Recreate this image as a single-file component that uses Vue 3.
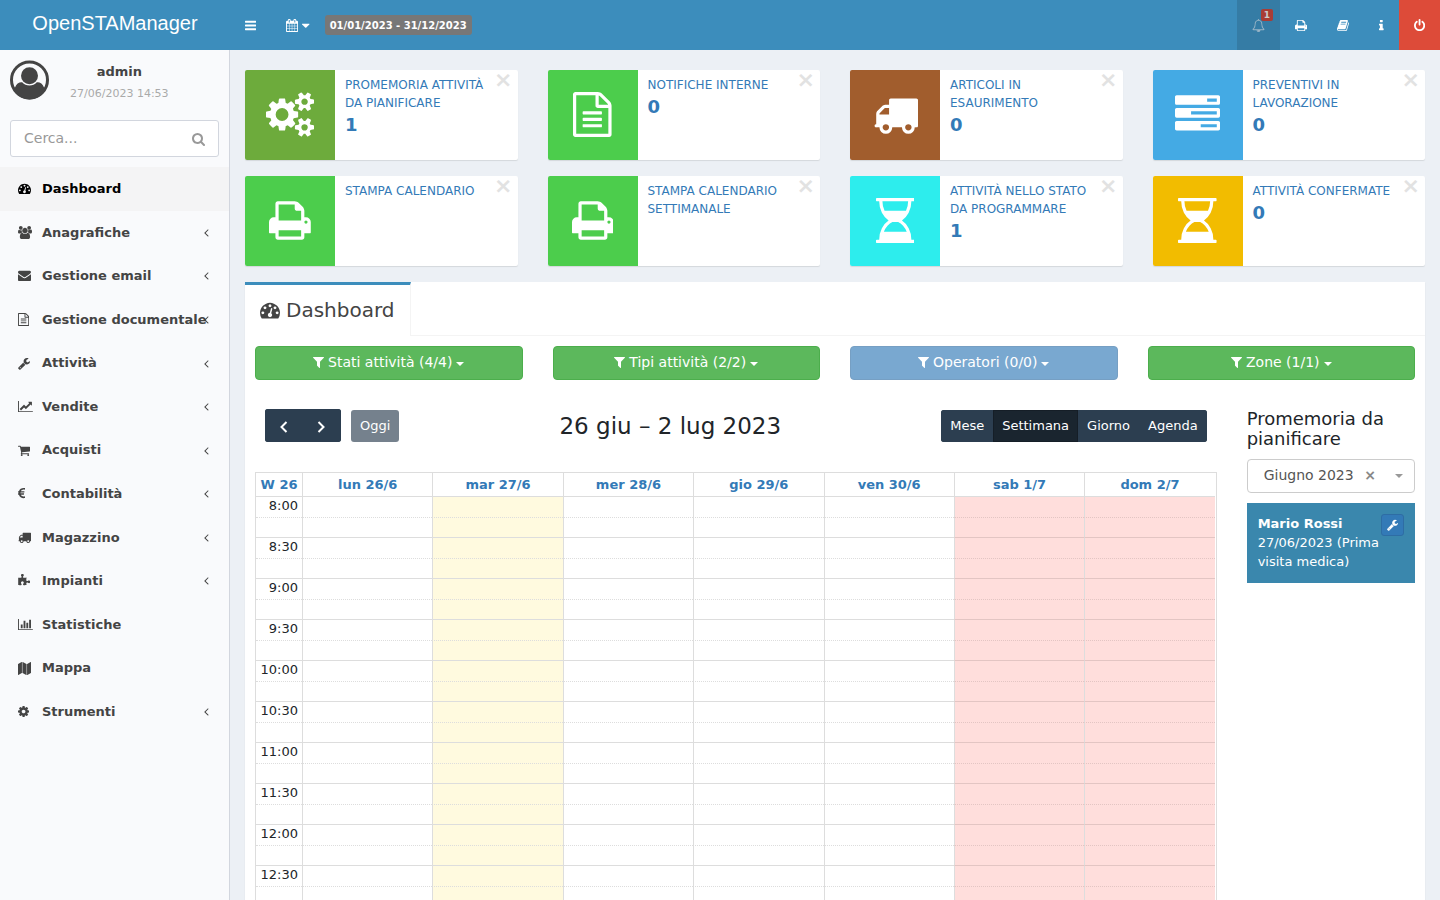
<script setup>
import { h } from 'vue'

const glyphs = {
  bars: [128, 1536, 'M1664 1344v128q0 26-19 45t-45 19h-1408q-26 0-45-19t-19-45v-128q0-26 19-45t45-19h1408q26 0 45 19t19 45zm0-512v128q0 26-19 45t-45 19h-1408q-26 0-45-19t-19-45v-128q0-26 19-45t45-19h1408q26 0 45 19t19 45zm0-512v128q0 26-19 45t-45 19h-1408q-26 0-45-19t-19-45v-128q0-26 19-45t45-19h1408q26 0 45 19t19 45z'],
  calendar: [64, 1664, 'M192 1664h288v-288h-288v288zm352 0h320v-288h-320v288zm-352-352h288v-320h-288v320zm352 0h320v-320h-320v320zm-352-384h288v-288h-288v288zm736 736h320v-288h-320v288zm-384-736h320v-288h-320v288zm768 736h288v-288h-288v288zm-384-352h320v-320h-320v320zm-352-864v-288q0-13-9.5-22.5t-22.5-9.5h-64q-13 0-22.5 9.5t-9.5 22.5v288q0 13 9.5 22.5t22.5 9.5h64q13 0 22.5-9.5t9.5-22.5zm736 864h288v-320h-288v320zm-384-384h320v-288h-320v288zm384 0h288v-288h-288v288zm32-480v-288q0-13-9.5-22.5t-22.5-9.5h-64q-13 0-22.5 9.5t-9.5 22.5v288q0 13 9.5 22.5t22.5 9.5h64q13 0 22.5-9.5t9.5-22.5zm384-64v1280q0 52-38 90t-90 38h-1408q-52 0-90-38t-38-90v-1280q0-52 38-90t90-38h128v-96q0-66 47-113t113-47h64q66 0 113 47t47 113v96h384v-96q0-66 47-113t113-47h64q66 0 113 47t47 113v96h128q52 0 90 38t38 90z'],
  caret: [384, 1024, 'M1408 704q0 26-19 45l-448 448q-19 19-45 19t-45-19l-448-448q-19-19-19-45t19-45 45-19h896q26 0 45 19t19 45z'],
  search: [64, 1664, 'M1216 832q0-185-131.5-316.5t-316.5-131.5-316.5 131.5-131.5 316.5 131.5 316.5 316.5 131.5 316.5-131.5 131.5-316.5zm512 832q0 52-38 90t-90 38q-54 0-90-38l-343-342q-179 124-399 124-143 0-273.5-55.5t-225-150-150-225-55.5-273.5 55.5-273.5 150-225 225-150 273.5-55.5 273.5 55.5 225 150 150 225 55.5 273.5q0 220-124 399l343 343q37 37 37 90z'],
  dashboard: [0, 1792, 'M384 1152q0-53-37.5-90.5t-90.5-37.5-90.5 37.5-37.5 90.5 37.5 90.5 90.5 37.5 90.5-37.5 37.5-90.5zm192-448q0-53-37.5-90.5t-90.5-37.5-90.5 37.5-37.5 90.5 37.5 90.5 90.5 37.5 90.5-37.5 37.5-90.5zm428 481l101-382q6-26-7.5-48.5t-38.5-29.5-48 6.5-30 39.5l-101 382q-60 5-107 43.5t-63 98.5q-20 77 20 146t117 89 146-20 89-117q16-60-6-117t-72-91zm660-33q0-53-37.5-90.5t-90.5-37.5-90.5 37.5-37.5 90.5 37.5 90.5 90.5 37.5 90.5-37.5 37.5-90.5zm-640-640q0-53-37.5-90.5t-90.5-37.5-90.5 37.5-37.5 90.5 37.5 90.5 90.5 37.5 90.5-37.5 37.5-90.5zm448 192q0-53-37.5-90.5t-90.5-37.5-90.5 37.5-37.5 90.5 37.5 90.5 90.5 37.5 90.5-37.5 37.5-90.5zm320 448q0 261-141 483-19 29-54 29h-1402q-35 0-54-29-141-221-141-483 0-182 71-348t191-286 286-191 348-71 348 71 286 191 191 286 71 348z'],
  users: [0, 1920, 'M593 896q-162 5-265 128h-134q-82 0-138-40.5t-56-118.5q0-353 124-353 6 0 43.5 21t97.5 42.5 119 21.5q67 0 133-23-5 37-5 66 0 159 93 290zm1071 637q0 120-73 189.5t-194 69.5h-874q-121 0-194-69.5t-73-189.5q0-53 3.5-103.5t14-109 26.5-108.5 43-97.5 62-81 85.5-53.5 111.5-20q10 0 43 21.5t73 48 107 48 135 21.5 135-21.5 107-48 73-48 43-21.5q61 0 111.5 20t85.5 53.5 62 81 43 97.5 26.5 108.5 14 109 3.5 103.5zm-1024-1277q0 106-75 181t-181 75-181-75-75-181 75-181 181-75 181 75 75 181zm704 384q0 159-112.5 271.5t-271.5 112.5-271.5-112.5-112.5-271.5 112.5-271.5 271.5-112.5 271.5 112.5 112.5 271.5zm576 225q0 78-56 118.5t-138 40.5h-134q-103-123-265-128 93-131 93-290 0-29-5-66 66 23 133 23 59 0 119-21.5t97.5-42.5 43.5-21q124 0 124 353zm-128-609q0 106-75 181t-181 75-181-75-75-181 75-181 181-75 181 75 75 181z'],
  envelope: [0, 1792, 'M1792 710v794q0 66-47 113t-113 47h-1472q-66 0-113-47t-47-113v-794q44 49 101 87 362 246 497 345 57 42 92.5 65.5t94.5 48 110 24.5h2q51 0 110-24.5t94.5-48 92.5-65.5q170-123 498-345 57-39 100-87zm0-294q0 79-49 151t-122 123q-376 261-468 325-10 7-42.5 30.5t-54 38-52 32.5-57.5 27-50 9h-2q-23 0-50-9t-57.5-27-52-32.5-54-38-42.5-30.5q-91-64-262-182.5t-205-142.5q-62-42-117-115.5t-55-136.5q0-78 41.5-130t118.5-52h1472q65 0 112.5 47t47.5 113z'],
  file: [128, 1536, 'M1596 380q28 28 48 76t20 88v1152q0 40-28 68t-68 28h-1344q-40 0-68-28t-28-68v-1600q0-40 28-68t68-28h896q40 0 88 20t76 48zm-444-244v376h376q-10-29-22-41l-313-313q-12-12-41-22zm384 1528v-1024h-416q-40 0-68-28t-28-68v-416h-768v1536h1280zm-1024-864q0-14 9-23t23-9h704q14 0 23 9t9 23v64q0 14-9 23t-23 9h-704q-14 0-23-9t-9-23v-64zm736 224q14 0 23 9t9 23v64q0 14-9 23t-23 9h-704q-14 0-23-9t-9-23v-64q0-14 9-23t23-9h704zm0 256q14 0 23 9t9 23v64q0 14-9 23t-23 9h-704q-14 0-23-9t-9-23v-64q0-14 9-23t23-9h704z'],
  wrench: [64, 1664, 'M448 1472q0-26-19-45t-45-19-45 19-19 45 19 45 45 19 45-19 19-45zm644-420l-682 682q-37 37-90 37-52 0-91-37l-106-108q-38-36-38-90 0-53 38-91l681-681q39 98 114.5 173.5t173.5 114.5zm634-435q0 39-23 106-47 134-164.5 217.5t-258.5 83.5q-185 0-316.5-131.5t-131.5-316.5 131.5-316.5 316.5-131.5q58 0 121.5 16.5t107.5 46.5q16 11 16 28t-16 28l-293 169v224l193 107q5-3 79-48.5t135.5-81 70.5-35.5q15 0 23.5 10t8.5 25z'],
  line: [0, 2048, 'M2048 1536v128h-2048v-1536h128v1408h1920zm-128-1248v435q0 21-19.5 29.5t-35.5-7.5l-121-121-633 633q-10 10-23 10t-23-10l-233-233-416 416-192-192 585-585q10-10 23-10t23 10l233 233 464-464-121-121q-16-16-7.5-35.5t29.5-19.5h435q14 0 23 9t9 23z'],
  cart: [64, 1664, 'M704 1536q0 52-38 90t-90 38-90-38-38-90 38-90 90-38 90 38 38 90zm896 0q0 52-38 90t-90 38-90-38-38-90 38-90 90-38 90 38 38 90zm128-1088v512q0 24-16.5 42.5t-40.5 21.5l-1044 122q13 60 13 70 0 16-24 64h920q26 0 45 19t19 45-19 45-45 19h-1024q-26 0-45-19t-19-45q0-11 8-31.5t16-36 21.5-40 15.5-29.5l-177-823h-204q-26 0-45-19t-19-45 19-45 45-19h256q16 0 28.5 6.5t19.5 15.5 13 24.5 8 26 5.5 29.5 4.5 26h1201q26 0 45 19t19 45z'],
  euro: [384, 1024, 'M1360 1307l35 159q3 12-3 22.5t-17 14.5l-5 1q-4 2-10.5 3.5t-16 4.5-21.5 5.5-25.5 5-30 5-33.5 4.5-36.5 3-38.5 1q-234 0-409-130.5t-238-351.5h-95q-13 0-22.5-9.5t-9.5-22.5v-113q0-13 9.5-22.5t22.5-9.5h66q-2-57 1-105h-67q-14 0-23-9t-9-23v-114q0-14 9-23t23-9h98q67-210 243.5-338t400.5-128q102 0 194 23 11 3 20 15 6 11 3 24l-43 159q-3 13-14 19.5t-24 2.5l-4-1q-4-1-11.5-2.5l-17.5-3.5-22.5-3.5-26-3-29-2.5-29.5-1q-126 0-226 64t-150 176h468q16 0 25 12 10 12 7 26l-24 114q-5 26-32 26h-488q-3 37 0 105h459q15 0 25 12 9 12 6 27l-24 112q-2 11-11 18.5t-20 7.5h-387q48 117 149.5 185.5t228.5 68.5q18 0 36-1.5t33.5-3.5 29.5-4.5 24.5-5 18.5-4.5l12-3 5-2q13-5 26 2 12 7 15 21z'],
  truck: [0, 1792, 'M640 1408q0-52-38-90t-90-38-90 38-38 90 38 90 90 38 90-38 38-90zm-384-512h384v-256h-158q-13 0-22 9l-195 195q-9 9-9 22v30zm1280 512q0-52-38-90t-90-38-90 38-38 90 38 90 90 38 90-38 38-90zm256-1088v1024q0 15-4 26.5t-13.5 18.5-16.5 11.5-23.5 6-22.5 2-25.5 0-22.5-.5q0 106-75 181t-181 75-181-75-75-181h-384q0 106-75 181t-181 75-181-75-75-181h-64q-3 0-22.5.5t-25.5 0-22.5-2-23.5-6-16.5-11.5-13.5-18.5-4-26.5q0-26 19-45t45-19v-320q0-8-.5-35t0-38 2.5-34.5 6.5-37 14-30.5 22.5-30l198-198q19-19 50.5-32t58.5-13h160v-192q0-26 19-45t45-19h1024q26 0 45 19t19 45z'],
  puzzle: [64, 1664, 'M1755 1083q0 81-44.5 135t-123.5 54q-41 0-77.5-17.5t-59-38-56.5-38-71-17.5q-110 0-110 124 0 39 16 115t15 115v5q-22 0-33 1-34 3-97.5 11.5t-115.5 13.5-98 5q-61 0-103-26.5t-42-83.5q0-37 17.5-71t38-56.5 38-59 17.5-77.5q0-79-54-123.5t-135-44.5q-84 0-143 45.5t-59 127.5q0 43 15 83t33.5 64.5 33.5 53 15 50.5q0 45-46 89-37 35-117 35-95 0-245-24-9-2-27.5-4t-27.5-4l-13-2q-1 0-3-1-2 0-2-1v-1024q2 1 17.5 3.5t34 5 21.5 3.5q150 24 245 24 80 0 117-35 46-44 46-89 0-22-15-50.5t-33.5-53-33.5-64.5-15-83q0-82 59-127.5t144-45.5q80 0 134 44.5t54 123.5q0 41-17.5 77.5t-38 59-38 56.5-17.5 71q0 57 42 83.5t103 26.5q64 0 180-15t163-17v2q-1 2-3.5 17.5t-5 34-3.5 21.5q-24 150-24 245 0 80 35 117 44 46 89 46 22 0 50.5-15t53-33.5 64.5-33.5 83-15q82 0 127.5 59t45.5 143z'],
  chart: [0, 2048, 'M640 896v512h-256v-512h256zm384-512v1024h-256v-1024h256zm1024 1152v128h-2048v-1536h128v1408h1920zm-640-896v768h-256v-768h256zm384-384v1152h-256v-1152h256z'],
  map: [0, 1792, 'M512 0q13 0 22.5 9.5t9.5 22.5v1472q0 20-17 28l-480 256q-7 4-15 4-13 0-22.5-9.5t-9.5-22.5v-1472q0-20 17-28l480-256q7-4 15-4zm1248 0q13 0 22.5 9.5t9.5 22.5v1472q0 20-17 28l-480 256q-7 4-15 4-13 0-22.5-9.5t-9.5-22.5v-1472q0-20 17-28l480-256q7-4 15-4zm-1120 0q8 0 14 3l512 256q18 10 18 29v1472q0 13-9.5 22.5t-22.5 9.5q-8 0-14-3l-512-256q-18-10-18-29v-1472q0-13 9.5-22.5t22.5-9.5z'],
  cog: [128, 1536, 'M1152 896q0-106-75-181t-181-75-181 75-75 181 75 181 181 75 181-75 75-181zm512-109v222q0 12-8 23t-20 13l-185 28q-19 54-39 91 35 50 107 138 10 12 10 25t-9 23q-27 37-99 108t-94 71q-12 0-26-9l-138-108q-44 23-91 38-16 136-29 186-7 28-36 28h-222q-14 0-24.5-8.5t-11.5-21.5l-28-184q-49-16-90-37l-141 107q-10 9-25 9-14 0-25-11-126-114-165-168-7-10-7-23 0-12 8-23 15-21 51-66.5t54-70.5q-27-50-41-99l-183-27q-13-2-21-12.5t-8-23.5v-222q0-12 8-23t19-13l186-28q14-46 39-92-40-57-107-138-10-12-10-24 0-10 9-23 26-36 98.5-107.5t94.5-71.5q13 0 26 10l138 107q44-23 91-38 16-136 29-186 7-28 36-28h222q14 0 24.5 8.5t11.5 21.5l28 184q49 16 90 37l142-107q9-9 24-9 13 0 25 10 129 119 165 170 7 8 7 22 0 12-8 23-15 21-51 66.5t-54 70.5q26 50 41 98l183 28q13 2 21 12.5t8 23.5z'],
  angle: [576, 640, 'M1203 544q0 13-10 23l-393 393 393 393q10 10 10 23t-10 23l-50 50q-10 10-23 10t-23-10l-466-466q-10-10-10-23t10-23l466-466q10-10 23-10t23 10l50 50q10 10 10 23z'],
  bell: [0, 1792, 'M912 1696q0-16-16-16-59 0-101.5-42.5t-42.5-101.5q0-16-16-16t-16 16q0 73 51.5 124.5t124.5 51.5q16 0 16-16zm-666-288h1300q-266-300-266-832 0-51-24-105t-69-103-121.5-80.5-169.5-31.5-169.5 31.5-121.5 80.5-69 103-24 105q0 532-266 832zm1482 0q0 52-38 90t-90 38h-448q0 106-75 181t-181 75-181-75-75-181h-448q-52 0-90-38t-38-90q50-42 91-88t85-119.5 74.5-158.5 50-206 19.5-260q0-152 117-282.5t307-158.5q-8-19-8-39 0-40 28-68t68-28 68 28 28 68q0 20-8 39 190 28 307 158.5t117 282.5q0 139 19.5 260t50 206 74.5 158.5 85 119.5 91 88z'],
  print: [64, 1664, 'M448 1536h896v-256h-896v256zm0-640h896v-384h-160q-40 0-68-28t-28-68v-160h-640v640zm1152 64q0-26-19-45t-45-19-45 19-19 45 19 45 45 19 45-19 19-45zm128 0v416q0 13-9.5 22.5t-22.5 9.5h-224v160q0 40-28 68t-68 28h-960q-40 0-68-28t-28-68v-160h-224q-13 0-22.5-9.5t-9.5-22.5v-416q0-79 56.5-135.5t135.5-56.5h64v-544q0-40 28-68t68-28h672q40 0 88 20t76 48l152 152q28 28 48 76t20 88v256h64q79 0 135.5 56.5t56.5 135.5z'],
  book: [64, 1664, 'M1703 478q40 57 18 129l-275 906q-19 64-76.5 107.5t-122.5 43.5h-923q-77 0-148.5-53.5t-99.5-131.5q-24-67-2-127 0-4 3-27t4-37q1-8-3-21.5t-3-19.5q2-11 8-21t16.5-23.5 16.5-23.5q23-38 45-91.5t30-91.5q3-10 .5-30t-.5-28q3-11 17-28t17-23q21-36 42-92t25-90q1-9-2.5-32t.5-28q4-13 22-30.5t22-22.5q19-26 42.5-84.5t27.5-96.5q1-8-3-25.5t-2-26.5q2-8 9-18t18-23 17-21q8-12 16.5-30.5t15-35 16-36 19.5-32 26.5-23.5 36-11.5 47.5 5.5l-1 3q38-9 51-9h761q74 0 114 56t18 130l-274 906q-36 119-71.5 153.5t-128.5 34.5h-869q-27 0-38 15-11 16-1 43 24 70 144 70h923q29 0 56-15.5t35-41.5l300-987q7-22 5-57 38 15 59 43zm-1064 2q-4 13 2 22.5t20 9.5h608q13 0 25.5-9.5t16.5-22.5l21-64q4-13-2-22.5t-20-9.5h-608q-13 0-25.5 9.5t-16.5 22.5zm-83 256q-4 13 2 22.5t20 9.5h608q13 0 25.5-9.5t16.5-22.5l21-64q4-13-2-22.5t-20-9.5h-608q-13 0-25.5 9.5t-16.5 22.5z'],
  info: [576, 640, 'M1216 1344v128q0 26-19 45t-45 19h-512q-26 0-45-19t-19-45v-128q0-26 19-45t45-19h64v-384h-64q-26 0-45-19t-19-45v-128q0-26 19-45t45-19h384q26 0 45 19t19 45v576h64q26 0 45 19t19 45zm-128-1152v192q0 26-19 45t-45 19h-256q-26 0-45-19t-19-45v-192q0-26 19-45t45-19h256q26 0 45 19t19 45z'],
  power: [128, 1536, 'M1664 896q0 156-61 298t-164 245-245 164-298 61-298-61-245-164-164-245-61-298q0-182 80.5-343t226.5-270q43-32 95.5-25t83.5 50q32 42 24.5 94.5t-49.5 84.5q-98 74-151.5 181t-53.5 228q0 104 40.5 198.5t109.5 163.5 163.5 109.5 198.5 40.5 198.5-40.5 163.5-109.5 109.5-163.5 40.5-198.5q0-121-53.5-228t-151.5-181q-42-32-49.5-84.5t24.5-94.5q31-43 84-50t95 25q146 109 226.5 270t80.5 343zm-640-768v640q0 52-38 90t-90 38-90-38-38-90v-640q0-52 38-90t90-38 90 38 38 90z'],
  cogs: [0, 1920, 'M896 896q0-106-75-181t-181-75-181 75-75 181 75 181 181 75 181-75 75-181zm768 512q0-52-38-90t-90-38-90 38-38 90q0 53 37.5 90.5t90.5 37.5 90.5-37.5 37.5-90.5zm0-1024q0-52-38-90t-90-38-90 38-38 90q0 53 37.5 90.5t90.5 37.5 90.5-37.5 37.5-90.5zm-384 421v185q0 10-7 19.5t-16 10.5l-155 24q-11 35-32 76 34 48 90 115 7 11 7 20 0 12-7 19-23 30-82.5 89.5t-78.5 59.5q-11 0-21-7l-115-90q-37 19-77 31-11 108-23 155-7 24-30 24h-186q-11 0-20-7.5t-10-17.5l-23-153q-34-10-75-31l-118 89q-7 7-20 7-11 0-21-8-144-133-144-160 0-9 7-19 10-14 41-53t47-61q-23-44-35-82l-152-24q-10-1-17-9.5t-7-19.5v-185q0-10 7-19.5t16-10.5l155-24q11-35 32-76-34-48-90-115-7-11-7-20 0-12 7-20 22-30 82-89t79-59q11 0 21 7l115 90q34-18 77-32 11-108 23-154 7-24 30-24h186q11 0 20 7.5t10 17.5l23 153q34 10 75 31l118-89q8-7 20-7 11 0 21 8 144 133 144 160 0 8-7 19-12 16-42 54t-45 60q23 48 34 82l152 23q10 2 17 10.5t7 19.5zm640 533v140q0 16-149 31-12 27-30 52 51 113 51 138 0 4-4 7-122 71-124 71-8 0-46-47t-52-68q-20 2-30 2t-30-2q-14 21-52 68t-46 47q-2 0-124-71-4-3-4-7 0-25 51-138-18-25-30-52-149-15-149-31v-140q0-16 149-31 13-29 30-52-51-113-51-138 0-4 4-7 4-2 35-20t59-34 30-16q8 0 46 46.5t52 67.5q20-2 30-2t30 2q51-71 92-112l6-2q4 0 124 70 4 3 4 7 0 25-51 138 17 23 30 52 149 15 149 31zm0-1024v140q0 16-149 31-12 27-30 52 51 113 51 138 0 4-4 7-122 71-124 71-8 0-46-47t-52-68q-20 2-30 2t-30-2q-14 21-52 68t-46 47q-2 0-124-71-4-3-4-7 0-25 51-138-18-25-30-52-149-15-149-31v-140q0-16 149-31 13-29 30-52-51-113-51-138 0-4 4-7 4-2 35-20t59-34 30-16q8 0 46 46.5t52 67.5q20-2 30-2t30 2q51-71 92-112l6-2q4 0 124 70 4 3 4 7 0 25-51 138 17 23 30 52 149 15 149 31z'],
  tasks: [0, 1792, 'M1024 1408h640v-128h-640v128zm-384-512h1024v-128h-1024v128zm640-512h384v-128h-384v128zm512 832v256q0 26-19 45t-45 19h-1664q-26 0-45-19t-19-45v-256q0-26 19-45t45-19h1664q26 0 45 19t19 45zm0-512v256q0 26-19 45t-45 19h-1664q-26 0-45-19t-19-45v-256q0-26 19-45t45-19h1664q26 0 45 19t19 45zm0-512v256q0 26-19 45t-45 19h-1664q-26 0-45-19t-19-45v-256q0-26 19-45t45-19h1664q26 0 45 19t19 45z'],
  hourglass: [0, 1536, 'M1408 128q0 261-106.5 461.5t-266.5 306.5q160 106 266.5 306.5t106.5 461.5h96q14 0 23 9t9 23v64q0 14-9 23t-23 9h-1472q-14 0-23-9t-9-23v-64q0-14 9-23t23-9h96q0-261 106.5-461.5t266.5-306.5q-160-106-266.5-306.5t-106.5-461.5h-96q-14 0-23-9t-9-23v-64q0-14 9-23t23-9h1472q14 0 23 9t9 23v64q0 14-9 23t-23 9h-96zm-128 0h-1024q0 206 85 384h854q85-178 85-384zm-57 1216q-54-141-145.5-241.5t-194.5-142.5h-230q-103 42-194.5 142.5t-145.5 241.5h910z'],
  filter: [192, 1408, 'M1595 295q17 41-14 70l-493 493v742q0 42-39 59-13 5-25 5-27 0-45-19l-256-256q-19-19-19-45v-486l-493-493q-31-29-14-70 17-39 59-39h1280q42 0 59 39z'],
}

const Icon = ({ name }) => {
  const [x, w, d] = glyphs[name]
  return h('svg', { class: 'icon', viewBox: `${x} 0 ${w} 1792`, 'aria-hidden': 'true' }, [
    h('path', { d, fill: 'currentColor', 'fill-rule': 'evenodd' }),
  ])
}
Icon.props = ['name']

const menu = [
  { icon: 'dashboard', label: 'Dashboard', active: true },
  { icon: 'users', label: 'Anagrafiche', sub: true },
  { icon: 'envelope', label: 'Gestione email', sub: true },
  { icon: 'file', label: 'Gestione documentale', sub: true },
  { icon: 'wrench', label: 'Attività', sub: true },
  { icon: 'line', label: 'Vendite', sub: true },
  { icon: 'cart', label: 'Acquisti', sub: true },
  { icon: 'euro', label: 'Contabilità', sub: true },
  { icon: 'truck', label: 'Magazzino', sub: true },
  { icon: 'puzzle', label: 'Impianti', sub: true },
  { icon: 'chart', label: 'Statistiche' },
  { icon: 'map', label: 'Mappa' },
  { icon: 'cog', label: 'Strumenti', sub: true },
]

const widgets = [
  { icon: 'cogs', tone: 'olive', label: 'PROMEMORIA ATTIVITÀ DA PIANIFICARE', value: '1' },
  { icon: 'file', tone: 'green', label: 'NOTIFICHE INTERNE', value: '0' },
  { icon: 'truck', tone: 'brown', label: 'ARTICOLI IN ESAURIMENTO', value: '0' },
  { icon: 'tasks', tone: 'sky', label: 'PREVENTIVI IN LAVORAZIONE', value: '0' },
  { icon: 'print', tone: 'green', label: 'STAMPA CALENDARIO' },
  { icon: 'print', tone: 'green', label: 'STAMPA CALENDARIO SETTIMANALE' },
  { icon: 'hourglass', tone: 'cyan', label: 'ATTIVITÀ NELLO STATO DA PROGRAMMARE', value: '1' },
  { icon: 'hourglass', tone: 'amber', label: 'ATTIVITÀ CONFERMATE', value: '0' },
]

const filters = [
  { label: 'Stati attività (4/4)' },
  { label: 'Tipi attività (2/2)' },
  { label: 'Operatori (0/0)', disabled: true },
  { label: 'Zone (1/1)' },
]

const days = [
  { label: 'lun 26/6' },
  { label: 'mar 27/6', kind: 'today' },
  { label: 'mer 28/6' },
  { label: 'gio 29/6' },
  { label: 'ven 30/6' },
  { label: 'sab 1/7', kind: 'weekend' },
  { label: 'dom 2/7', kind: 'weekend' },
]

const times = ['8:00', '8:30', '9:00', '9:30', '10:00', '10:30', '11:00', '11:30', '12:00', '12:30']
const views = ['Mese', 'Settimana', 'Giorno', 'Agenda']
</script>

<template>
  <div class="app">
    <header class="topbar">
      <a class="logo" href="#">OpenSTAManager</a>
      <nav class="nav-left">
        <a href="#" aria-label="Menu"><Icon name="bars" /></a>
        <a href="#" class="period" aria-label="Periodo"><Icon name="calendar" /><Icon name="caret" /></a>
        <span class="range">01/01/2023 - 31/12/2023</span>
      </nav>
      <nav class="nav-right">
        <a href="#" class="notify" aria-label="Notifiche"><Icon name="bell" /><span class="count">1</span></a>
        <a href="#" aria-label="Stampa"><Icon name="print" /></a>
        <a href="#" aria-label="Manuale"><Icon name="book" /></a>
        <a href="#" aria-label="Informazioni"><Icon name="info" /></a>
        <a href="#" class="logout" aria-label="Esci"><Icon name="power" /></a>
      </nav>
    </header>

    <div class="body">
      <aside class="sidebar">
        <div class="user">
          <svg class="avatar" viewBox="0 0 39 40" aria-hidden="true">
            <circle cx="19.5" cy="20" r="18" fill="none" stroke="#444" stroke-width="3" />
            <circle cx="19.500" cy="15.700" r="8.500" fill="#444" />
            <path fill="#444" d="M4 31Q5.500 23.500 9.500 22.500Q11 22 12.200 22.300A9.800 9.800 0 0 0 26.800 22.300Q28 22 29.500 22.500Q33.500 23.500 35 31A18.500 18.500 0 0 1 4 31Z" />
          </svg>
          <div class="who">
            <a href="#" class="name">admin</a>
            <span class="stamp">27/06/2023 14:53</span>
          </div>
        </div>
        <form class="search" @submit.prevent>
          <input type="text" placeholder="Cerca..." aria-label="Cerca" />
          <button type="submit" aria-label="Avvia ricerca"><Icon name="search" /></button>
        </form>
        <ul class="menu">
          <li v-for="item in menu" :key="item.label">
            <a href="#" :class="{ active: item.active }">
              <span class="pict"><Icon :name="item.icon" /></span>
              <span class="label">{{ item.label }}</span>
              <span v-if="item.sub" class="arrow"><Icon name="angle" /></span>
            </a>
          </li>
        </ul>
      </aside>

      <main class="content">
        <section class="widgets">
          <article v-for="w in widgets" :key="w.label" class="widget">
            <div class="tile" :class="w.tone"><Icon :name="w.icon" /></div>
            <a href="#" class="info">
              <span class="title">{{ w.label }}</span>
              <strong v-if="w.value">{{ w.value }}</strong>
            </a>
            <button type="button" class="close" aria-label="Chiudi">×</button>
          </article>
        </section>

        <section class="panel">
          <div class="tabs">
            <a href="#" class="tab"><Icon name="dashboard" />Dashboard</a>
          </div>
          <div class="pane">
            <div class="filters">
              <button v-for="f in filters" :key="f.label" type="button" :disabled="f.disabled">
                <Icon name="filter" />{{ f.label }}<i class="caret"></i>
              </button>
            </div>

            <div class="planner">
              <div class="calendar">
                <div class="toolbar">
                  <div class="side">
                    <div class="group arrows">
                      <button type="button" aria-label="Precedente">
                        <svg viewBox="0 0 20 20"><path d="M12.500 5L7.500 10l5 5" /></svg>
                      </button>
                      <button type="button" aria-label="Successivo">
                        <svg viewBox="0 0 20 20"><path d="M6.500 5l5 5-5 5" /></svg>
                      </button>
                    </div>
                    <div class="group"><button type="button" disabled>Oggi</button></div>
                  </div>
                  <h2>26 giu – 2 lug 2023</h2>
                  <div class="group">
                    <button v-for="v in views" :key="v" type="button" :class="{ on: v === 'Settimana' }">{{ v }}</button>
                  </div>
                </div>

                <table>
                  <thead>
                    <tr>
                      <th class="axis"><a href="#">W 26</a></th>
                      <th v-for="d in days" :key="d.label"><a href="#">{{ d.label }}</a></th>
                    </tr>
                  </thead>
                  <tbody>
                    <template v-for="t in times" :key="t">
                      <tr class="major">
                        <td class="axis">{{ t }}</td>
                        <td v-for="d in days" :key="d.label" :class="d.kind"></td>
                      </tr>
                      <tr class="minor">
                        <td class="axis"></td>
                        <td v-for="d in days" :key="d.label" :class="d.kind"></td>
                      </tr>
                    </template>
                  </tbody>
                </table>
              </div>

              <aside class="reminders">
                <h4>Promemoria da pianificare</h4>
                <div class="picker">
                  <select aria-label="Mese"><option>Giugno 2023</option></select>
                  <button type="button" aria-label="Rimuovi">×</button>
                  <i class="caret"></i>
                </div>
                <div class="event">
                  <button type="button" aria-label="Pianifica"><Icon name="wrench" /></button>
                  <b>Mario Rossi</b><br />27/06/2023 (Prima visita medica)
                </div>
              </aside>
            </div>
          </div>
        </section>
      </main>
    </div>
  </div>
</template>

<style>
body {
  margin: 0;
}
</style>

<style scoped>
.app,
.app :deep(*) {
  box-sizing: border-box;
}
.app {
  display: flex;
  flex-direction: column;
  height: 100vh;
  overflow: hidden;
  font: 13px/1.43 "DejaVu Sans", sans-serif;
  color: #212529;
}
a {
  color: inherit;
  text-decoration: none;
}
button,
input,
select {
  font: inherit;
}
button {
  cursor: pointer;
}
.app :deep(.icon) {
  display: block;
  height: 1em;
  flex: none;
}

/* top bar */
.topbar {
  display: flex;
  flex: none;
  height: 50px;
  background: #3c8dbc;
  color: #fff;
}
.logo {
  width: 230px;
  text-align: center;
  font: 20px/46px "Liberation Sans", Arial, sans-serif;
}
.nav-left,
.nav-right {
  display: flex;
}
.nav-left {
  flex: 1;
  align-items: center;
}
.nav-left a,
.nav-right a {
  display: flex;
  align-items: center;
  height: 50px;
  padding: 1px 15px 0;
}
.nav-left .period {
  gap: 4px;
}
.range {
  padding: 1px 5px 0;
  border-radius: 3px;
  background: #777;
  font-size: 10px;
  font-weight: bold;
  line-height: 19px;
}
.nav-right .notify {
  position: relative;
  background: #357ca5;
  color: #9ab5c6;
}
.count {
  position: absolute;
  top: 9px;
  right: 7px;
  padding: 0 3px;
  border-radius: 2px;
  background: #a93c35;
  color: #ccc;
  font-size: 9px;
  font-weight: bold;
  line-height: 12px;
}
.nav-right .logout {
  background: #dd4b39;
}

/* sidebar */
.body {
  display: flex;
  flex: 1;
  min-height: 0;
}
.sidebar {
  flex: none;
  width: 230px;
  border-right: 1px solid #d2d6de;
  background: #f9fafc;
  color: #444;
}
.user {
  display: flex;
  gap: 21px;
  height: 60px;
  padding: 10px;
}
.avatar {
  width: 39px;
  height: 40px;
}
.who {
  display: flex;
  flex-direction: column;
  align-items: center;
  gap: 3px;
  padding-top: 2px;
  line-height: 19px;
}
.name {
  font-weight: bold;
}
.stamp {
  color: #aaa;
  font-size: 11px;
}
.search {
  display: flex;
  height: 37px;
  margin: 10px;
  border: 1px solid #d2d6de;
  border-radius: 3px;
  background: #fff;
}
.search input {
  flex: 1;
  min-width: 0;
  padding: 0 13px;
  border: 0;
  outline: 0;
  background: none;
  font-size: 14px;
}
.search input::placeholder {
  color: #999;
}
.search button {
  padding: 0 13px;
  border: 0;
  background: none;
  color: #999;
  font-size: 14px;
}
.menu {
  margin: 0;
  padding: 0;
  list-style: none;
}
.menu a {
  position: relative;
  display: flex;
  align-items: center;
  gap: 4px;
  padding: 12px 5px 12px 18px;
  font-weight: bold;
  white-space: nowrap;
}
.menu .active {
  background: #f4f4f5;
  color: #000;
}
.pict {
  width: 20px;
}
.label {
  padding-top: 1px;
}
.arrow {
  position: absolute;
  right: 20px;
}

/* widgets */
.content {
  flex: 1;
  min-width: 0;
  padding: 20px 15px 0;
  overflow: hidden;
  background: #ecf0f5;
}
.widgets {
  display: grid;
  grid-template-columns: repeat(4, minmax(0, 1fr));
  gap: 16px 30px;
}
.widget {
  position: relative;
  display: flex;
  min-height: 90px;
  border-radius: 2px;
  background: #fff;
  box-shadow: 0 1px 1px rgba(0, 0, 0, 0.1);
}
.tile {
  display: flex;
  flex: none;
  align-items: center;
  justify-content: center;
  width: 90px;
  padding-bottom: 1px;
  border-radius: 2px 0 0 2px;
  color: #fff;
  font-size: 45px;
}
.olive { background: #6dab3c; }
.green { background: #4ccd4c; }
.brown { background: #a15d2d; }
.sky { background: #44aae4; }
.cyan { background: #2deded; }
.amber { background: #f2bc00; }
.info {
  display: flex;
  flex: 1;
  flex-direction: column;
  min-width: 0;
  padding: 6px 30px 5px 10px;
  color: #337ab7;
}
.title {
  font-size: 12px;
  line-height: 18px;
}
.info strong {
  font-size: 18px;
  line-height: 26px;
}
.close {
  position: absolute;
  top: 0;
  right: 5px;
  padding: 0;
  border: 0;
  background: none;
  color: #e2e2e2;
  font-size: 22px;
  font-weight: bold;
  line-height: 20px;
}

/* panel */
.panel {
  margin-top: 16px;
  background: #fff;
  box-shadow: 0 1px 1px rgba(0, 0, 0, 0.1);
}
.tabs {
  display: flex;
  border-bottom: 1px solid #f4f4f4;
}
.tab {
  display: flex;
  align-items: center;
  gap: 6px;
  margin-bottom: -1px;
  padding: 10px 15px 11px;
  border-top: 3px solid #3c8dbc;
  border-right: 1px solid #f4f4f4;
  background: #fff;
  color: #444;
  font-size: 20px;
  line-height: 30px;
}
.pane {
  padding: 10px;
}
.filters {
  display: grid;
  grid-template-columns: repeat(4, minmax(0, 1fr));
  gap: 30px;
}
.filters button {
  display: flex;
  align-items: center;
  justify-content: center;
  gap: 4px;
  height: 34px;
  padding: 0 12px 2px;
  border: 1px solid #4cae4c;
  border-radius: 4px;
  background: #5cb85c;
  color: #fff;
  font-size: 14px;
}
.filters button:disabled {
  border-color: #2e6da4;
  background: #337ab7;
  opacity: 0.65;
}
.caret {
  border: 4px solid transparent;
  border-top-color: currentColor;
  border-bottom: 0;
}
.filters .caret {
  margin-top: 4px;
}

/* calendar */
.planner {
  display: grid;
  grid-template-columns: repeat(12, minmax(0, 1fr));
  gap: 30px;
  padding-top: 29px;
}
.calendar {
  grid-column: span 10;
}
.reminders {
  grid-column: span 2;
}
.toolbar {
  display: flex;
  align-items: center;
  justify-content: space-between;
  padding: 0 10px 30px;
}
.side {
  display: flex;
  align-items: center;
  gap: 10px;
}
.toolbar h2 {
  margin: 0;
  padding-top: 2px;
  font-size: 23px;
  font-weight: normal;
  line-height: 31px;
}
.group {
  display: flex;
  overflow: hidden;
  border-radius: 3px;
}
.group button {
  height: 32px;
  padding: 2px 8px 0;
  border: 1px solid #2c3e50;
  background: #2c3e50;
  color: #fff;
}
.group .on {
  border-color: #151e27;
  background: #1a252f;
}
.group button:disabled {
  opacity: 0.65;
}
.arrows button {
  height: 33px;
}
.group svg {
  display: block;
  width: 20px;
  height: 20px;
  fill: none;
  stroke: #fff;
  stroke-width: 2;
}
table {
  width: 100%;
  padding-right: 1px;
  border: 1px solid #ddd;
  border-spacing: 0;
  table-layout: fixed;
}
th,
td {
  height: 20px;
  padding: 0;
  border-bottom: 1px solid #ddd;
  border-left: 1px solid #ddd;
}
th {
  height: 24px;
  padding-top: 2px;
  color: #337ab7;
}
.axis {
  width: 46px;
  border-left: 0;
}
td.axis {
  padding-right: 4px;
  text-align: right;
  vertical-align: top;
  line-height: 18px;
}
.major td {
  height: 21px;
  border-bottom-style: dotted;
}
.today {
  background: #fffadf;
}
.weekend {
  background: #ffdedc;
}
td.weekend {
  border-bottom-color: #e3c5c3;
}

/* reminders */
.reminders h4 {
  margin: 0 0 10px;
  font-size: 18px;
  font-weight: normal;
  line-height: 20px;
}
.picker {
  position: relative;
}
.picker select {
  display: block;
  width: 100%;
  height: 34px;
  padding: 0 16px 2px;
  border: 1px solid #ccc;
  border-radius: 4px;
  appearance: none;
  background: #fff;
  color: #555;
  font-size: 14px;
}
.picker button {
  position: absolute;
  top: 6px;
  right: 39px;
  padding: 0;
  border: 0;
  background: none;
  color: #888;
  font-size: 14px;
  font-weight: bold;
  line-height: 20px;
}
.picker .caret {
  position: absolute;
  top: 15px;
  right: 12px;
  color: #999;
}
.event {
  margin-top: 10px;
  padding: 11px 11px 12px;
  background: #3a87ad;
  color: #fff;
  line-height: 19px;
}
.event button {
  float: right;
  width: 23px;
  height: 22px;
  padding: 0 5px;
  border: 1px solid #2e6da4;
  border-radius: 3px;
  background: #337ab7;
  color: #fff;
  font-size: 12px;
}
</style>
